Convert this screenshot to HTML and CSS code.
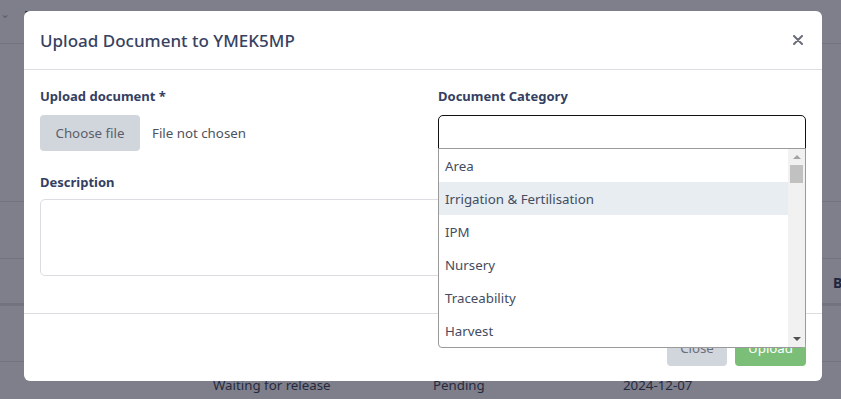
FILE: index.html
```html
<!DOCTYPE html>
<html>
<head>
<meta charset="utf-8">
<link rel="stylesheet" href="styles.css">
</head>
<body>
<div class="page">
  <div class="topbar">
    <span class="chev">&#8964;</span>
    <span class="section">MARKETING</span>
  </div>
  <div class="spacer"></div>
  <div class="row row-a"></div>
  <div class="row row-b"><span class="hcell">B</span></div>
  <div class="row row-c"></div>
  <div class="row row-d">
    <span class="cell c1">Waiting for release</span>
    <span class="cell c2">Pending</span>
    <span class="cell c3">2024-12-07</span>
  </div>
</div>

<div class="modal">
  <div class="modal-header">
    <h2 class="modal-title">Upload Document to YMEK5MP</h2>
    <button class="close-x" aria-label="Close">
      <svg width="10" height="10" viewBox="0 0 10 10"><path d="M1 1L9 9M9 1L1 9" stroke="#6b6e79" stroke-width="2" stroke-linecap="round"/></svg>
    </button>
  </div>
  <div class="modal-body">
    <div class="grid">
      <div class="field">
        <label class="label">Upload document *</label>
        <div class="file-row">
          <span class="file-btn">Choose file</span>
          <span class="file-name">File not chosen</span>
        </div>
      </div>
      <div class="field cat">
        <label class="label">Document Category</label>
        <div class="select-wrap">
          <div class="select-box"></div>
          <div class="dropdown">
            <ul class="options">
              <li>Area</li>
              <li class="active">Irrigation &amp; Fertilisation</li>
              <li>IPM</li>
              <li>Nursery</li>
              <li>Traceability</li>
              <li>Harvest</li>
            </ul>
            <div class="scrollbar">
              <span class="arrow up"></span>
              <span class="thumb"></span>
              <span class="arrow down"></span>
            </div>
          </div>
        </div>
      </div>
    </div>
    <label class="label desc-label">Description</label>
    <div class="textarea"></div>
  </div>
  <div class="modal-footer">
    <span class="btn btn-close">Close</span>
    <span class="btn btn-upload">Upload</span>
  </div>
</div>
</body>
</html>
```
FILE: styles.css
```css
* { box-sizing: border-box; }
html, body { margin: 0; padding: 0; }
body {
  width: 841px;
  height: 399px;
  overflow: hidden;
  background: #7e7f8a;
  font-family: "Noto Sans", "Open Sans", sans-serif;
  position: relative;
}

/* background page (under overlay) */
.page { display: flex; flex-direction: column; }
.topbar {
  height: 44px;
  border-bottom: 1px solid #72737e;
  display: flex;
  align-items: flex-start;
  gap: 14px;
  padding-top: 8px;
}
.chev { color: #5f606b; font-size: 12px; line-height: 12px; margin-left: 0; }
.section { color: #262a3e; font-weight: 700; font-size: 14px; line-height: 16px; letter-spacing: 1px; }
.spacer { height: 158px; border-bottom: 1px solid #72737e; }
.row { position: relative; }
.row-a { height: 57px; border-bottom: 1px solid #72737e; }
.row-b { height: 47px; border-bottom: 3px solid #72737e; }
.row-c { height: 56px; border-bottom: 1px solid #72737e; }
.row-d { height: 40px; }
.hcell { position: absolute; left: 833px; top: 14px; font-weight: 700; font-size: 14px; color: #1f2640; }
.cell { position: absolute; top: 14px; font-size: 13.3px; color: #262a40; }
.c1 { left: 213px; }
.c2 { left: 433px; }
.c3 { left: 623px; }

/* modal */
.modal {
  position: absolute;
  left: 24px;
  top: 11px;
  width: 798px;
  height: 370px;
  background: #fff;
  border-radius: 6px;
  display: flex;
  flex-direction: column;
}
.modal-header {
  height: 59px;
  border-bottom: 1px solid #dcdee2;
  display: flex;
  align-items: center;
  justify-content: space-between;
  padding: 0 16px;
}
.modal-title {
  margin: 0;
  font-size: 17px;
  font-weight: 500;
  color: #364260;
}
.close-x {
  border: 0;
  background: none;
  padding: 0;
  margin-right: 3px;
  display: flex;
}
.modal-body {
  padding: 16px 16px 0;
  height: 244px;
  border-bottom: 1px solid #dcdee2;
}
.grid {
  display: grid;
  grid-template-columns: 367px 368px;
  column-gap: 31px;
}
.label {
  display: block;
  font-size: 13px;
  line-height: 21px;
  font-weight: 700;
  color: #344062;
}
.file-row {
  margin-top: 8px;
  display: flex;
  align-items: center;
  gap: 12px;
}
.file-btn {
  width: 100px;
  height: 36px;
  background: #d1d5dc;
  border-radius: 4px;
  display: flex;
  align-items: center;
  justify-content: center;
  font-size: 13.3px;
  color: #5a5f6b;
}
.file-name { font-size: 13.3px; color: #4d5260; }

.select-wrap { position: relative; margin-top: 8px; }
.select-box {
  height: 34px;
  border: 1px solid #111;
  border-radius: 5px 5px 0 0;
  background: #fff;
}
.dropdown {
  position: absolute;
  left: 0;
  right: 0;
  top: 33px;
  height: 200px;
  background: #fff;
  border: 1px solid #9a9a9a;
  border-radius: 0 0 4px 4px;
  display: flex;
  z-index: 2;
}
.options {
  list-style: none;
  margin: 0;
  padding: 0;
  flex: 1;
}
.options li {
  height: 33px;
  display: flex;
  align-items: center;
  padding-left: 6px;
  font-size: 13.3px;
  color: #434c60;
}
.options li.active { background: #e8edf1; }
.scrollbar {
  width: 17px;
  background: #f1f1f1;
  display: flex;
  flex-direction: column;
  align-items: center;
  position: relative;
}
.arrow { width: 0; height: 0; border-left: 4px solid transparent; border-right: 4px solid transparent; }
.arrow.up { border-bottom: 4px solid #a3a3a3; margin-top: 6px; }
.arrow.down { border-top: 4px solid #505050; position: absolute; bottom: 6px; }
.thumb { width: 13px; height: 18px; background: #c1c1c1; margin-top: 6px; }

.desc-label { margin-top: 21px; }
.textarea {
  margin-top: 6px;
  height: 77px;
  border: 1px solid #dcdde2;
  border-radius: 5px;
}

.modal-footer {
  flex: 1;
  display: flex;
  justify-content: flex-end;
  align-items: center;
  gap: 8px;
  padding: 0 16px;
}
.btn {
  height: 36px;
  border-radius: 4px;
  display: flex;
  align-items: center;
  justify-content: center;
  font-size: 13.3px;
}
.btn-close { width: 60px; background: #d1d5dc; color: #6a6f7b; }
.btn-upload { width: 71px; background: #7bbe78; color: #fff; }
```
